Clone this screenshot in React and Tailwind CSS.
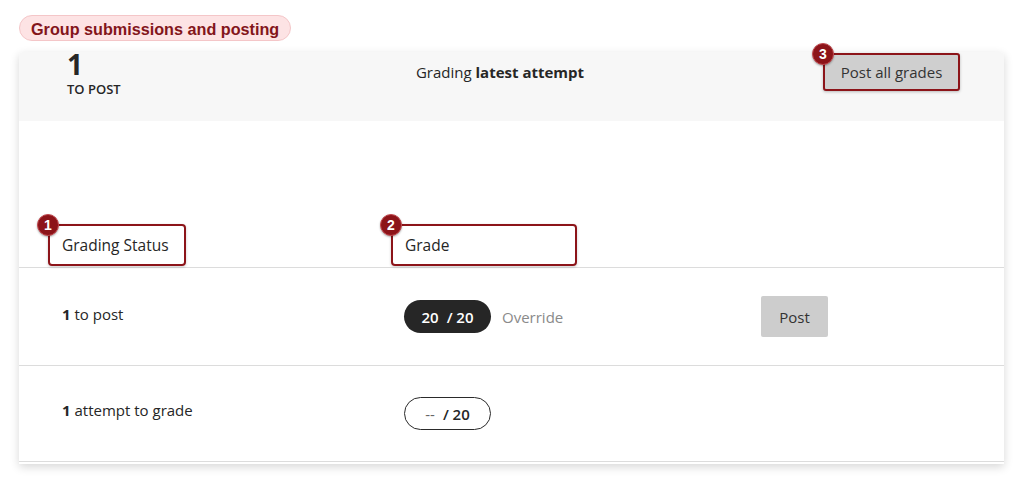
import React from "react";

// Numbered marker that sits over the corner of a highlighted control
function Marker({ n, className = "" }) {
  return (
    <span
      className={`absolute flex h-[22px] w-[22px] items-center justify-center rounded-full border border-[#c2494f] bg-[#8c1419] text-[14px] font-bold leading-none text-white shadow-[0_1px_2px_rgba(0,0,0,0.3)] ${className}`}
      style={{ fontFamily: '"Liberation Sans", Arial, sans-serif' }}
    >
      {n}
    </span>
  );
}

function GradePill({ score, dark }) {
  return (
    <span
      className={`inline-flex h-[33px] w-[87px] items-center justify-center rounded-full text-[15px] ${
        dark
          ? "bg-[#262626] font-semibold text-white"
          : "border border-[#2a2a2a] bg-white text-[#262626]"
      }`}
    >
      <span className={dark ? "" : "text-[#666] font-normal"}>{score}</span>
      <span className="ml-[8px] font-semibold">/ 20</span>
    </span>
  );
}

export default function App() {
  return (
    <main
      className="min-h-screen bg-white pl-[19px] pt-[15px] text-[#262626]"
      style={{ fontFamily: '"Open Sans", "Noto Sans", sans-serif' }}
    >
      {/* Section label */}
      <div
        className="inline-flex h-[26px] items-center rounded-full border border-[#f4c6c8] bg-[#fde3e4] px-[11px] pt-[3px] text-[16.2px] font-bold text-[#83151b]"
        style={{ fontFamily: '"Liberation Sans", Arial, sans-serif' }}
      >
        Group submissions and posting
      </div>

      {/* Posting panel */}
      <section className="mt-[11px] w-[985px] rounded-t-[4px] bg-white shadow-[0_3px_10px_rgba(0,0,0,0.16)]">
        {/* Header band */}
        <div className="grid h-[69px] grid-cols-[300px_1fr_323px] rounded-t-[4px] bg-[#f7f7f7]">
          <div className="pl-[48px]">
            <div className="text-[28px] font-bold leading-[24px]">1</div>
            <div className="mt-[5px] text-[13px] font-semibold leading-[16px]">
              TO POST
            </div>
          </div>
          <div className="pt-[9px] text-center text-[15px] leading-[22px]">
            Grading <span className="font-bold">latest attempt</span>
          </div>
          <div className="flex justify-end pr-[44px] pt-[1px]">
            <button className="relative h-[38px] w-[137px] rounded-[3px] border-2 border-[#8c1419] bg-[#cfcfcf] text-[15px] text-[#333] shadow-[0_1px_3px_rgba(0,0,0,0.25)]">
              Post all grades
              <Marker n="3" className="-left-[13px] -top-[12px]" />
            </button>
          </div>
        </div>

        {/* Column headers */}
        <div className="grid h-[146px] grid-cols-[342px_357px_1fr] items-end pb-[1px] pl-[43px]">
          <div>
            <div className="relative -ml-[14px] flex h-[42px] w-[138px] items-center rounded-[4px] border-2 border-[#8c1419] pl-[12px] text-[15.5px] font-medium shadow-[0_1px_3px_rgba(0,0,0,0.2)]">
              Grading Status
              <Marker n="1" className="-left-[13px] -top-[12px]" />
            </div>
          </div>
          <div>
            <div className="relative -ml-[13px] flex h-[42px] w-[186px] items-center rounded-[4px] border-2 border-[#8c1419] pl-[12px] text-[15.5px] font-medium shadow-[0_1px_3px_rgba(0,0,0,0.2)]">
              Grade
              <Marker n="2" className="-left-[13px] -top-[12px]" />
            </div>
          </div>
          <div />
        </div>

        {/* Rows */}
        <div className="grid h-[98px] grid-cols-[342px_357px_1fr] items-center border-t border-[#dcdcdc] pl-[43px]">
          <div className="pb-[6px] text-[15px]">
            <span className="font-bold">1</span> to post
          </div>
          <div className="flex items-center">
            <GradePill score="20" dark />
            <span className="ml-[11px] text-[15px] text-[#8a8a8a]">Override</span>
          </div>
          <div>
            <button className="h-[41px] w-[67px] rounded-[2px] bg-[#cdcdcd] text-[15px] text-[#333]">
              Post
            </button>
          </div>
        </div>

        <div className="grid h-[97px] grid-cols-[342px_357px_1fr] items-center border-y border-[#dcdcdc] pl-[43px]">
          <div className="pb-[8px] text-[15px]">
            <span className="font-bold">1</span> attempt to grade
          </div>
          <div>
            <GradePill score="--" />
          </div>
          <div />
        </div>
        <div className="h-[2px]" />
      </section>
    </main>
  );
}
